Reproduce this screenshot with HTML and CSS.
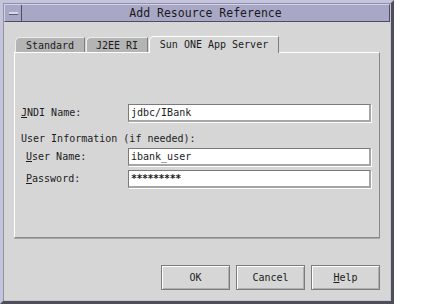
FILE: index.html
```html
<!DOCTYPE html>
<html lang="en">
<head>
    <meta charset="UTF-8">
    <title>Add Resource Reference</title>
    <link rel="stylesheet" href="styles.css">
</head>
<body>
    <div class="window">
        <div class="titlebar">
            <div class="menu-btn"><span class="menu-bar"></span></div>
            <div class="title">Add Resource Reference</div>
        </div>

        <div class="tabs">
            <div class="tab tab-std">Standard</div>
            <div class="tab tab-ri">J2EE RI</div>
            <div class="tab tab-sun selected">Sun ONE App Server</div>
        </div>

        <div class="panel">
            <div class="row">
                <div class="label"><u>J</u>NDI Name:</div>
                <div class="field">jdbc/IBank</div>
            </div>
            <div class="heading">User Information (if needed):</div>
            <div class="row sub">
                <div class="label"><u>U</u>ser Name:</div>
                <div class="field">ibank_user</div>
            </div>
            <div class="row sub pass">
                <div class="label"><u>P</u>assword:</div>
                <div class="field stars">*********</div>
            </div>
        </div>

        <div class="buttons">
            <div class="btn">OK</div>
            <div class="btn">Cancel</div>
            <div class="btn"><u>H</u>elp</div>
        </div>
    </div>
</body>
</html>
```

FILE: styles.css
```css
body {
    margin: 0;
    padding: 0;
    background-color: #fff;
    font-family: "DejaVu Sans Mono", "Liberation Mono", monospace;
    font-size: 10px;
    color: #1c1c1c;
}

.window {
    width: 394px;
    height: 304px;
    box-sizing: border-box;
    background-color: #d6d6d6;
    border-style: solid;
    border-width: 3px 3px 3px 3px;
    border-color: #c4c4dc #4e4e56 #4e4e56 #c4c4dc;
    box-shadow: inset 1px 1px 0 #9090a8, inset -1px -1px 0 #c4c4dc;
    display: flex;
    flex-direction: column;
}

.titlebar {
    margin: 1px 1px 0 1px;
    height: 18px;
    box-sizing: border-box;
    display: flex;
    background-color: #a8a8c6;
    border-top: 1px solid #d2d2ea;
    border-left: 1px solid #d2d2ea;
    border-right: 1px solid #4c4c64;
    border-bottom: 1px solid #4c4c64;
}

.menu-btn {
    width: 16px;
    display: flex;
    align-items: center;
    justify-content: center;
    border-right: 1px solid #4c4c64;
}

.menu-bar {
    width: 9px;
    height: 2px;
    background-color: #d8d8ee;
    border-bottom: 1px solid #5a5a72;
}

.title {
    flex: 1;
    text-align: center;
    font-size: 11.5px;
    line-height: 16px;
    color: #1a1a1a;
}

.tabs {
    display: flex;
    margin-top: 14px;
    padding-left: 12px;
    height: 16px;
    align-items: flex-end;
}

.tab {
    height: 15px;
    line-height: 15px;
    box-sizing: border-box;
    text-align: center;
    background-color: #b4b4b4;
    border-top: 1px solid #ececec;
    border-left: 1px solid #ececec;
    border-right: 1px solid #7e7e7e;
    border-top-left-radius: 5px;
    margin-right: 1px;
    white-space: nowrap;
}

.tab-std { width: 70px; }
.tab-ri { width: 62px; }
.tab-sun { width: 130px; }

.tab.selected {
    height: 17px;
    line-height: 15px;
    background-color: #d6d6d6;
    border-top-color: #fff;
    border-left-color: #fff;
    position: relative;
    top: 1px;
}

.panel {
    margin-left: 11px;
    width: 366px;
    height: 186px;
    box-sizing: border-box;
    border-top: 1px solid #fff;
    border-left: 1px solid #fff;
    border-right: 1px solid #888;
    border-bottom: 1px solid #888;
    box-shadow: 0 1px 0 #a8a8a8;
    padding: 50px 8px 0 6px;
}

.row {
    display: flex;
    align-items: center;
    height: 19px;
}

.label {
    width: 107px;
    flex-shrink: 0;
}

.sub .label {
    width: 102px;
    padding-left: 5px;
}

.field {
    flex: 1;
    height: 18px;
    box-sizing: border-box;
    background-color: #fff;
    border-top: 1px solid #7a7a7a;
    border-left: 1px solid #7a7a7a;
    border-right: 2px solid #a6a6a6;
    border-bottom: 2px solid #a6a6a6;
    box-shadow: 1px 1px 0 #fff;
    padding-left: 2px;
    line-height: 15px;
}

.stars {
    font-weight: bold;
    letter-spacing: -0.5px;
}

.heading {
    margin-top: 10px;
    height: 13px;
    line-height: 13px;
}

.row.sub {
    margin-top: 2px;
}

.row.pass {
    margin-top: 3px;
}

.buttons {
    display: flex;
    justify-content: flex-end;
    gap: 6px;
    margin-top: 27px;
    padding-right: 11px;
}

.btn {
    width: 69px;
    height: 25px;
    box-sizing: border-box;
    border: 1px solid #7c7c7c;
    box-shadow: inset 1px 1px 0 #fff, inset -1px -1px 0 #b0b0b0;
    text-align: center;
    line-height: 23px;
}
```
